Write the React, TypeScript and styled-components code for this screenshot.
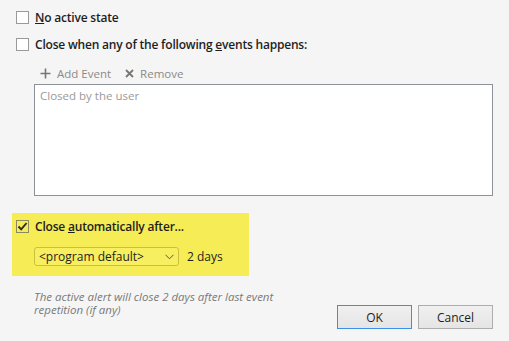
import React from 'react'
import styled, { createGlobalStyle } from 'styled-components'

const GlobalStyle = createGlobalStyle`
  html, body {
    margin: 0;
    padding: 0;
    background: #f5f5f5;
  }
  body {
    font-family: "Open Sans", "Noto Sans", sans-serif;
    font-size: 12px;
    color: #1e1e1e;
  }
`

const Dialog = styled.div`
  width: 509px;
  height: 341px;
  box-sizing: border-box;
  padding: 11px 16px 0 12px;
  display: flex;
  flex-direction: column;
`
const CheckRow = styled.label<{ $top?: number }>`
  display: flex;
  align-items: center;
  gap: 6px;
  height: 13px;
  margin: ${p => p.$top || 0}px 0 0 4px;
  font-weight: 600;
  font-size: 12px;
  letter-spacing: -0.2px;
  white-space: nowrap;
`
const Box = styled.span<{ $checked?: boolean }>`
  width: 13px;
  height: 13px;
  box-sizing: border-box;
  border: 1px solid ${p => (p.$checked ? '#8a8a5a' : '#9a9a9a')};
  background: ${p => (p.$checked ? 'transparent' : '#fff')};
  flex: none;
  display: flex;
  align-items: center;
  justify-content: center;
`
const Toolbar = styled.div`
  display: flex;
  align-items: center;
  height: 14px;
  margin: 15px 0 0 28px;
  color: #8a8a8a;
  font-size: 11.5px;
`
const ToolButton = styled.span`
  display: flex;
  align-items: center;
  gap: 6px;
  margin-right: 14px;
`
const ListBox = styled.div`
  margin: 4px 0 0 22px;
  width: 459px;
  height: 112px;
  box-sizing: border-box;
  border: 1px solid #8d9199;
  background: #fff;
  padding: 3px 5px;
  color: #9a9a9a;
  font-size: 11.5px;
`
const Highlight = styled.div`
  margin-top: 17px;
  width: 237px;
  height: 63px;
  box-sizing: border-box;
  background: #f6ec56;
  padding-top: 7px;
  display: flex;
  flex-direction: column;
`
const SelectRow = styled.div`
  display: flex;
  align-items: center;
  gap: 8px;
  margin: 14px 0 0 22px;
  font-size: 12px;
`
const Select = styled.div`
  width: 145px;
  height: 19px;
  box-sizing: border-box;
  border: 1px solid #cbbf3e;
  border-radius: 3px;
  background: #f8ef60;
  display: flex;
  align-items: center;
  justify-content: space-between;
  padding: 0 4px 0 4px;
  color: #1e1e1e;
`
const Footer = styled.div`
  display: flex;
  justify-content: space-between;
  align-items: flex-start;
  margin: 14px 0 0 22px;
`
const Hint = styled.div`
  width: 262px;
  color: #7a7a7a;
  font-style: italic;
  font-size: 11.5px;
  line-height: 13px;
`
const Buttons = styled.div`
  display: flex;
  gap: 6px;
  margin-top: 15px;
`
const Button = styled.button<{ $default?: boolean }>`
  width: 75px;
  height: 24px;
  box-sizing: border-box;
  border: 1px solid ${p => (p.$default ? '#3d8ee6' : '#adadad')};
  background: linear-gradient(#f0f0f0, #e5e5e5);
  font-family: inherit;
  font-size: 12px;
  color: #1e1e1e;
  padding: 0;
`
const U = styled.span`
  text-decoration: underline;
`

const Check = () => (
  <svg width="11" height="11" viewBox="0 0 11 11">
    <path d="M1.5 5.5 L4.2 8.4 L9.6 2" fill="none" stroke="#2a2a2a" strokeWidth="1.9" />
  </svg>
)

const Plus = () => (
  <svg width="11" height="11" viewBox="0 0 11 11">
    <path d="M5.5 0.5 V10.5 M0.5 5.5 H10.5" stroke="#777" strokeWidth="1.6" />
  </svg>
)

const Cross = () => (
  <svg width="9" height="9" viewBox="0 0 9 9">
    <path d="M1 1 L8 8 M8 1 L1 8" stroke="#777" strokeWidth="1.8" />
  </svg>
)

const Chevron = () => (
  <svg width="9" height="6" viewBox="0 0 9 6">
    <path d="M0.5 0.8 L4.5 4.8 L8.5 0.8" fill="none" stroke="#555" strokeWidth="1" />
  </svg>
)

export default function App() {
  return (
    <Dialog>
      <GlobalStyle />
      <CheckRow>
        <Box />
        <span><U>N</U>o active state</span>
      </CheckRow>
      <CheckRow $top={14}>
        <Box />
        <span>Close when any of the following <U>e</U>vents happens:</span>
      </CheckRow>
      <Toolbar>
        <ToolButton><Plus />Add Event</ToolButton>
        <ToolButton><Cross />Remove</ToolButton>
      </Toolbar>
      <ListBox>Closed by the user</ListBox>
      <Highlight>
        <CheckRow>
          <Box $checked><Check /></Box>
          <span>Close <U>a</U>utomatically after...</span>
        </CheckRow>
        <SelectRow>
          <Select>
            <span>&lt;program default&gt;</span>
            <Chevron />
          </Select>
          <span>2 days</span>
        </SelectRow>
      </Highlight>
      <Footer>
        <Hint>The active alert will close 2 days after last event repetition (if any)</Hint>
        <Buttons>
          <Button $default>OK</Button>
          <Button>Cancel</Button>
        </Buttons>
      </Footer>
    </Dialog>
  )
}
